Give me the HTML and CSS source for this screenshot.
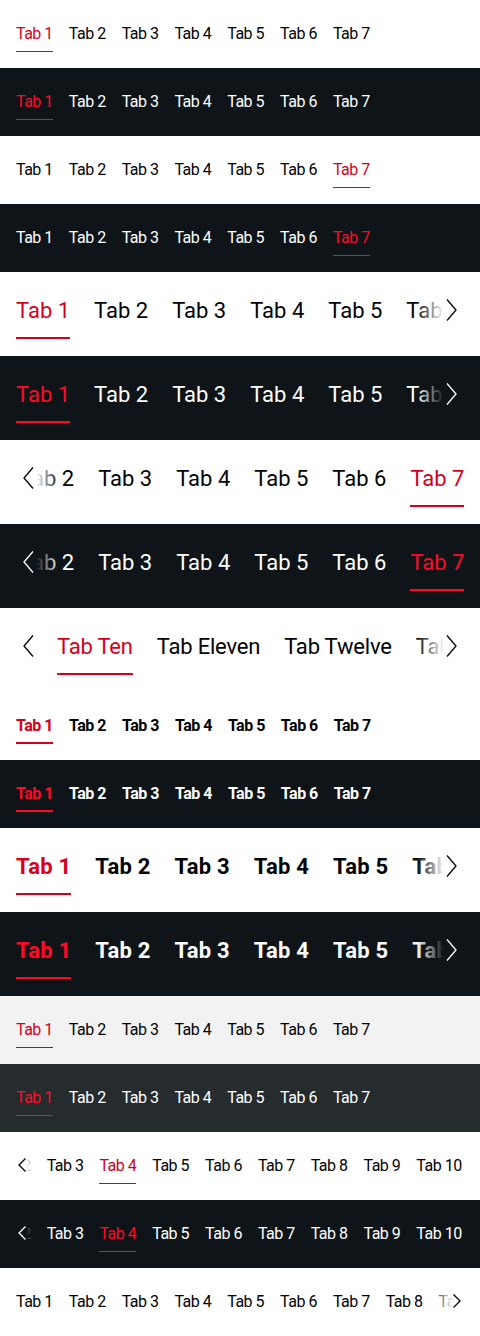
FILE: index.html
```html
<!DOCTYPE html>
<html lang="en">
<head>
<meta charset="utf-8">
<title>Tabs Bar</title>
<link rel="stylesheet" href="styles.css">
</head>
<body>

<div class="bar bar--s light">
  <div class="scroller"><div class="list">
    <span class="tab is-active">Tab 1</span><span class="tab">Tab 2</span><span class="tab">Tab 3</span><span class="tab">Tab 4</span><span class="tab">Tab 5</span><span class="tab">Tab 6</span><span class="tab">Tab 7</span>
  </div></div>
</div>

<div class="bar bar--s dark">
  <div class="scroller"><div class="list">
    <span class="tab is-active">Tab 1</span><span class="tab">Tab 2</span><span class="tab">Tab 3</span><span class="tab">Tab 4</span><span class="tab">Tab 5</span><span class="tab">Tab 6</span><span class="tab">Tab 7</span>
  </div></div>
</div>

<div class="bar bar--s light">
  <div class="scroller"><div class="list">
    <span class="tab">Tab 1</span><span class="tab">Tab 2</span><span class="tab">Tab 3</span><span class="tab">Tab 4</span><span class="tab">Tab 5</span><span class="tab">Tab 6</span><span class="tab is-active">Tab 7</span>
  </div></div>
</div>

<div class="bar bar--s dark">
  <div class="scroller"><div class="list">
    <span class="tab">Tab 1</span><span class="tab">Tab 2</span><span class="tab">Tab 3</span><span class="tab">Tab 4</span><span class="tab">Tab 5</span><span class="tab">Tab 6</span><span class="tab is-active">Tab 7</span>
  </div></div>
</div>

<div class="bar bar--l light">
  <div class="scroller"><div class="list">
    <span class="tab is-active">Tab 1</span><span class="tab">Tab 2</span><span class="tab">Tab 3</span><span class="tab">Tab 4</span><span class="tab">Tab 5</span><span class="tab">Tab 6</span><span class="tab">Tab 7</span>
  </div></div>
  <div class="fade fade--next"><svg class="chev" width="11" height="22" viewBox="0 0 11 22"><path d="M1 0.5 L10 11 L1 21.5"/></svg></div>
</div>

<div class="bar bar--l dark">
  <div class="scroller"><div class="list">
    <span class="tab is-active">Tab 1</span><span class="tab">Tab 2</span><span class="tab">Tab 3</span><span class="tab">Tab 4</span><span class="tab">Tab 5</span><span class="tab">Tab 6</span><span class="tab">Tab 7</span>
  </div></div>
  <div class="fade fade--next"><svg class="chev" width="11" height="22" viewBox="0 0 11 22"><path d="M1 0.5 L10 11 L1 21.5"/></svg></div>
</div>

<div class="bar bar--l light">
  <div class="scroller"><div class="list list--end-l">
    <span class="tab">Tab 1</span><span class="tab">Tab 2</span><span class="tab">Tab 3</span><span class="tab">Tab 4</span><span class="tab">Tab 5</span><span class="tab">Tab 6</span><span class="tab is-active">Tab 7</span>
  </div></div>
  <div class="fade fade--prev"><svg class="chev" width="11" height="22" viewBox="0 0 11 22"><path d="M10 0.5 L1 11 L10 21.5"/></svg></div>
</div>

<div class="bar bar--l dark">
  <div class="scroller"><div class="list list--end-l">
    <span class="tab">Tab 1</span><span class="tab">Tab 2</span><span class="tab">Tab 3</span><span class="tab">Tab 4</span><span class="tab">Tab 5</span><span class="tab">Tab 6</span><span class="tab is-active">Tab 7</span>
  </div></div>
  <div class="fade fade--prev"><svg class="chev" width="11" height="22" viewBox="0 0 11 22"><path d="M10 0.5 L1 11 L10 21.5"/></svg></div>
</div>

<div class="bar bar--l light">
  <div class="scroller"><div class="list list--mid">
    <span class="tab is-active">Tab Ten</span><span class="tab">Tab Eleven</span><span class="tab">Tab Twelve</span><span class="tab">Tab Thirteen</span>
  </div></div>
  <div class="fade fade--prev"><svg class="chev" width="11" height="22" viewBox="0 0 11 22"><path d="M10 0.5 L1 11 L10 21.5"/></svg></div>
  <div class="fade fade--next"><svg class="chev" width="11" height="22" viewBox="0 0 11 22"><path d="M1 0.5 L10 11 L1 21.5"/></svg></div>
</div>

<div class="bar bar--s bold light">
  <div class="scroller"><div class="list">
    <span class="tab is-active">Tab 1</span><span class="tab">Tab 2</span><span class="tab">Tab 3</span><span class="tab">Tab 4</span><span class="tab">Tab 5</span><span class="tab">Tab 6</span><span class="tab">Tab 7</span>
  </div></div>
</div>

<div class="bar bar--s bold dark">
  <div class="scroller"><div class="list">
    <span class="tab is-active">Tab 1</span><span class="tab">Tab 2</span><span class="tab">Tab 3</span><span class="tab">Tab 4</span><span class="tab">Tab 5</span><span class="tab">Tab 6</span><span class="tab">Tab 7</span>
  </div></div>
</div>

<div class="bar bar--l bold light">
  <div class="scroller"><div class="list">
    <span class="tab is-active">Tab 1</span><span class="tab">Tab 2</span><span class="tab">Tab 3</span><span class="tab">Tab 4</span><span class="tab">Tab 5</span><span class="tab">Tab 6</span><span class="tab">Tab 7</span>
  </div></div>
  <div class="fade fade--next"><svg class="chev" width="11" height="22" viewBox="0 0 11 22"><path d="M1 0.5 L10 11 L1 21.5"/></svg></div>
</div>

<div class="bar bar--l bold dark">
  <div class="scroller"><div class="list">
    <span class="tab is-active">Tab 1</span><span class="tab">Tab 2</span><span class="tab">Tab 3</span><span class="tab">Tab 4</span><span class="tab">Tab 5</span><span class="tab">Tab 6</span><span class="tab">Tab 7</span>
  </div></div>
  <div class="fade fade--next"><svg class="chev" width="11" height="22" viewBox="0 0 11 22"><path d="M1 0.5 L10 11 L1 21.5"/></svg></div>
</div>

<div class="bar bar--s surface">
  <div class="scroller"><div class="list">
    <span class="tab is-active">Tab 1</span><span class="tab">Tab 2</span><span class="tab">Tab 3</span><span class="tab">Tab 4</span><span class="tab">Tab 5</span><span class="tab">Tab 6</span><span class="tab">Tab 7</span>
  </div></div>
</div>

<div class="bar bar--s surface-dark">
  <div class="scroller"><div class="list">
    <span class="tab is-active">Tab 1</span><span class="tab">Tab 2</span><span class="tab">Tab 3</span><span class="tab">Tab 4</span><span class="tab">Tab 5</span><span class="tab">Tab 6</span><span class="tab">Tab 7</span>
  </div></div>
</div>

<div class="bar bar--s light">
  <div class="scroller"><div class="list list--end-s">
    <span class="tab">Tab 1</span><span class="tab">Tab 2</span><span class="tab">Tab 3</span><span class="tab is-active">Tab 4</span><span class="tab">Tab 5</span><span class="tab">Tab 6</span><span class="tab">Tab 7</span><span class="tab">Tab 8</span><span class="tab">Tab 9</span><span class="tab">Tab 10</span>
  </div></div>
  <div class="fade fade--prev"><svg class="chev" width="8" height="14" viewBox="0 0 8 14"><path d="M7.5 0.5 L1 7 L7.5 13.5"/></svg></div>
</div>

<div class="bar bar--s dark">
  <div class="scroller"><div class="list list--end-s">
    <span class="tab">Tab 1</span><span class="tab">Tab 2</span><span class="tab">Tab 3</span><span class="tab is-active">Tab 4</span><span class="tab">Tab 5</span><span class="tab">Tab 6</span><span class="tab">Tab 7</span><span class="tab">Tab 8</span><span class="tab">Tab 9</span><span class="tab">Tab 10</span>
  </div></div>
  <div class="fade fade--prev"><svg class="chev" width="8" height="14" viewBox="0 0 8 14"><path d="M7.5 0.5 L1 7 L7.5 13.5"/></svg></div>
</div>

<div class="bar bar--s light">
  <div class="scroller"><div class="list">
    <span class="tab">Tab 1</span><span class="tab">Tab 2</span><span class="tab">Tab 3</span><span class="tab">Tab 4</span><span class="tab">Tab 5</span><span class="tab">Tab 6</span><span class="tab">Tab 7</span><span class="tab">Tab 8</span><span class="tab">Tab 9</span><span class="tab">Tab 10</span>
  </div></div>
  <div class="fade fade--next"><svg class="chev" width="8" height="14" viewBox="0 0 8 14"><path d="M0.5 0.5 L7 7 L0.5 13.5"/></svg></div>
</div>

</body>
</html>
```

FILE: styles.css
```css
html, body {
  margin: 0;
  padding: 0;
}

body {
  width: 480px;
  font-family: Roboto, "Liberation Sans", sans-serif;
  -webkit-font-smoothing: antialiased;
}

.bar {
  position: relative;
  overflow: hidden;
  background: var(--bg);
  color: var(--fg);
}

.bar--s { height: 68px; }
.bar--l { height: 84px; }

.light {
  --bg: #ffffff;
  --bg0: rgba(255, 255, 255, 0);
  --fg: #010205;
  --active: #d5001c;
}

.dark {
  --bg: #0e1418;
  --bg0: rgba(14, 20, 24, 0);
  --fg: #ffffff;
  --active: #ff0a26;
}

.surface {
  --bg: #f2f2f2;
  --bg0: rgba(242, 242, 242, 0);
  --fg: #010205;
  --active: #d5001c;
}

.surface-dark {
  --bg: #262b2e;
  --bg0: rgba(38, 43, 46, 0);
  --fg: #ffffff;
  --active: #ff0a26;
}

.scroller {
  overflow: hidden;
  width: 100%;
  height: 100%;
}

.list {
  display: flex;
  gap: 16px;
  padding: 22px 16px 0;
  width: max-content;
}

.bar--l .list {
  gap: 24px;
  padding-top: 23px;
}

.list--end-l { margin-left: -74px; }
.list--end-s { margin-left: -75px; }
.list--mid { padding-left: 57px; }

.tab {
  display: block;
  font-size: 16px;
  line-height: 24px;
  letter-spacing: -0.5px;
  padding-bottom: 5px;
  border-bottom: 1px solid transparent;
  white-space: nowrap;
}

.bold .tab {
  font-weight: 700;
  padding-bottom: 4px;
  border-bottom-width: 2px;
}

.bar--l .tab {
  font-size: 22px;
  line-height: 32px;
  letter-spacing: 0;
  padding-bottom: 10px;
  border-bottom-width: 2px;
}

.bar--l.bold .tab {
  letter-spacing: 0.2px;
}

.list--mid .tab {
  letter-spacing: -0.2px;
}

.tab.is-active {
  color: var(--active);
  border-bottom-color: var(--active);
}

.fade {
  position: absolute;
  top: 0;
  bottom: 0;
  display: flex;
  align-items: flex-start;
  box-sizing: border-box;
  padding-top: 26px;
}

.bar--l .fade {
  padding-top: 27px;
}

.fade--next {
  right: 0;
  width: 50px;
  justify-content: flex-end;
  padding-right: 19px;
  background: linear-gradient(to right, var(--bg0), var(--bg) 24px);
}

.bar--l .fade--next {
  width: 64px;
  padding-right: 23px;
  background: linear-gradient(to right, var(--bg0), var(--bg) 28px);
}

.fade--prev {
  left: 0;
  width: 44px;
  justify-content: flex-start;
  padding-left: 18px;
  background: linear-gradient(to left, var(--bg0), var(--bg) 18px);
}

.bar--l .fade--prev {
  width: 60px;
  padding-left: 23px;
  background: linear-gradient(to left, var(--bg0), var(--bg) 24px);
}

.chev {
  display: block;
}

.chev path {
  fill: none;
  stroke: var(--fg);
  stroke-width: 1.3;
}
```
